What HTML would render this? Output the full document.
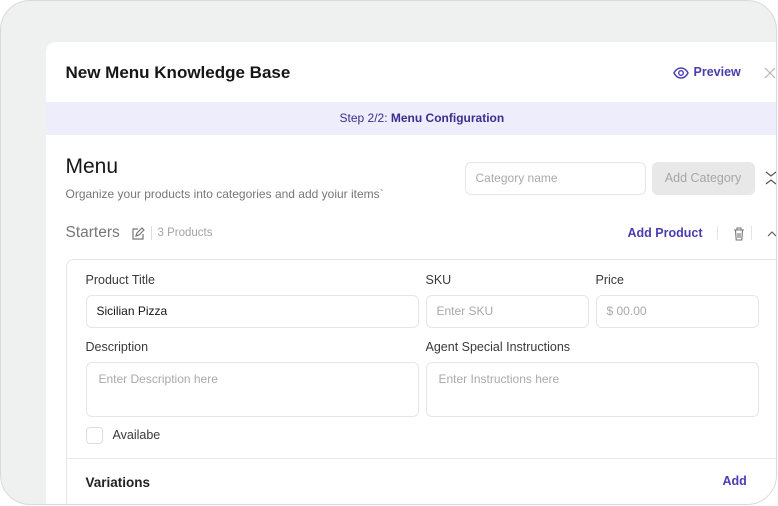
<!DOCTYPE html>
<html><head><style>
*{box-sizing:border-box;margin:0;padding:0}
body{width:778px;height:506px;background:#fff;font-family:"Liberation Sans",sans-serif;position:relative;overflow:hidden}
.frame{position:absolute;left:0;top:0;width:777px;height:505px;border:1.5px solid #d9dada;border-radius:30px;background:#eff0f0;overflow:hidden}
.panel{position:absolute;left:44.5px;top:40.5px;width:732px;height:463px;background:#fff;border-radius:10px 0 0 0;overflow:hidden}
.a{position:absolute;white-space:nowrap}
.inp{position:absolute;border:1px solid #e6e6e6;border-radius:6px;background:#fff;font-size:12px;color:#a9a9a9;padding-left:10px}
.lbl{position:absolute;font-size:12.5px;color:#3a3a3a}
</style></head><body>
<div class="frame"><div class="panel">
<div class="a" style="left:20px;top:21px;font-size:17px;font-weight:bold;color:#161616">New Menu Knowledge Base</div>
<svg class="a" style="left:627px;top:24px" width="16" height="14" viewBox="0 0 16 14"><path d="M1 7C3 3 5.5 2 8 2s5 1 7 5c-2 4-4.5 5-7 5S3 11 1 7z" fill="none" stroke="#4b3cb0" stroke-width="1.4"/><circle cx="8" cy="7" r="2.3" fill="none" stroke="#4b3cb0" stroke-width="1.4"/></svg>
<div class="a" style="left:648px;top:23px;font-size:12.5px;font-weight:bold;color:#4b3cb0">Preview</div>
<svg class="a" style="left:718px;top:25px" width="12" height="12"><path d="M1 1L11 11M11 1L1 11" stroke="#b5b5b5" stroke-width="1.2"/></svg>
<div class="a" style="left:0;top:60px;width:760px;height:33px;background:#eeedfb"></div>
<div class="a" style="left:294px;top:69px;font-size:12px;color:#3a2f8e">Step 2/2: <b>Menu Configuration</b></div>
<div class="a" style="left:20px;top:113px;font-size:21px;color:#161616">Menu</div>
<div class="a" style="left:20px;top:145px;font-size:12px;color:#777">Organize your products into categories and add yoiur items`</div>
<div class="inp" style="left:419px;top:120px;width:181px;height:33px;line-height:31px">Category name</div>
<div class="a" style="left:606px;top:120px;width:103px;height:33px;background:#e8e8e8;border-radius:6px;font-size:12.5px;color:#a6a6a6;line-height:33px;text-align:center">Add Category</div>
<svg class="a" style="left:719px;top:128px" width="12" height="16"><path d="M1 2l5 4 5-4M1 14l5-4 5 4" fill="none" stroke="#555" stroke-width="1.2"/></svg>
<div class="a" style="left:20px;top:182px;font-size:15.5px;color:#777">Starters</div>
<svg class="a" style="left:85px;top:185px" width="14" height="14" viewBox="0 0 14 14"><path d="M7 2H2v10h10V7" fill="none" stroke="#777" stroke-width="1.2"/><path d="M5 9l1-3 5-5 2 2-5 5z" fill="none" stroke="#777" stroke-width="1.2"/></svg>
<div class="a" style="left:105px;top:184px;width:1px;height:14px;background:#ddd"></div>
<div class="a" style="left:112px;top:185px;font-size:11.5px;color:#a2a2a2">3 Products</div>
<div class="a" style="left:582px;top:184px;font-size:12.5px;font-weight:bold;color:#4b3cb0">Add Product</div>
<div class="a" style="left:671px;top:184px;width:1px;height:14px;background:#e5e5e5"></div>
<svg class="a" style="left:687px;top:185px" width="12" height="14"><path d="M1 3h10M4 3V1h4v2M2.5 3l.7 10h5.6l.7-10M5 6v5M7 6v5" fill="none" stroke="#777" stroke-width="1.1"/></svg>
<div class="a" style="left:705px;top:184px;width:1px;height:14px;background:#e5e5e5"></div>
<svg class="a" style="left:721px;top:188px" width="10" height="8"><path d="M1 6l4-4 4 4" fill="none" stroke="#555" stroke-width="1.1"/></svg>
<div class="a" style="left:20px;top:217px;width:760px;height:300px;border:1px solid #e6e6e6;border-radius:8px"></div>
<div class="lbl" style="left:40px;top:231px">Product Title</div>
<div class="lbl" style="left:380px;top:231px">SKU</div>
<div class="lbl" style="left:550px;top:231px">Price</div>
<div class="inp" style="left:40px;top:253px;width:333px;height:33px;line-height:31px;color:#161616">Sicilian Pizza</div>
<div class="inp" style="left:380px;top:253px;width:163px;height:33px;line-height:31px">Enter SKU</div>
<div class="inp" style="left:550px;top:253px;width:163px;height:33px;line-height:31px">$ 00.00</div>
<div class="lbl" style="left:40px;top:298px">Description</div>
<div class="lbl" style="left:380px;top:298px">Agent Special Instructions</div>
<div class="inp" style="left:40px;top:320px;width:333px;height:55px;padding:9px 12px">Enter Description here</div>
<div class="inp" style="left:380px;top:320px;width:333px;height:55px;padding:9px 12px">Enter Instructions here</div>
<div class="a" style="left:40px;top:385px;width:17px;height:17px;border:1px solid #ddd;border-radius:4px"></div>
<div class="lbl" style="left:67px;top:386px">Availabe</div>
<div class="a" style="left:21px;top:416px;width:760px;height:1px;background:#ebebeb"></div>
<div class="a" style="left:40px;top:433px;font-size:13.5px;font-weight:bold;color:#222">Variations</div>
<div class="a" style="left:677px;top:432px;font-size:12.5px;font-weight:bold;color:#4b3cb0">Add</div>
</div></div>
</body></html>
